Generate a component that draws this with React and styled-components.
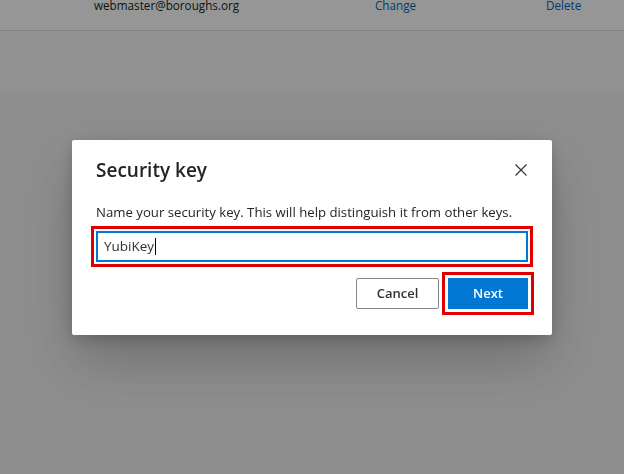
import React from 'react';
import styled, { createGlobalStyle } from 'styled-components';

const GlobalStyle = createGlobalStyle`
  html, body {
    margin: 0;
    padding: 0;
    height: 100%;
    overflow: hidden;
    background: #f2f2f2;
    font-family: "Open Sans", "Noto Sans", Arial, sans-serif;
  }
`;

const App = () => {
  return (
    <>
      <GlobalStyle />
      <Page>
        <EmailRow>
          <Cell>webmaster@boroughs.org</Cell>
          <LinkCell>Change</LinkCell>
          <LinkCell>Delete</LinkCell>
        </EmailRow>
        <Section />
      </Page>

      <Overlay>
        <Dialog role="dialog" aria-labelledby="dlg-title">
          <DialogHeader>
            <Title id="dlg-title">Security key</Title>
            <CloseButton aria-label="Close">
              <svg width="12" height="12" viewBox="0 0 12 12">
                <path d="M0.5 0.5 L11.5 11.5 M11.5 0.5 L0.5 11.5" stroke="#323130" strokeWidth="1.1" fill="none" />
              </svg>
            </CloseButton>
          </DialogHeader>
          <Description>
            Name your security key. This will help distinguish it from other keys.
          </Description>
          <Field highlighted>
            YubiKey<Caret />
          </Field>
          <Actions>
            <Button>Cancel</Button>
            <Button primary highlighted>Next</Button>
          </Actions>
        </Dialog>
      </Overlay>
    </>
  );
};

const Page = styled.div`
  min-height: 100vh;
  background: #f2f2f2;
`;

const EmailRow = styled.div`
  display: grid;
  grid-template-columns: 281px 171px auto;
  height: 30px;
  padding-left: 94px;
  background: #ffffff;
  border-bottom: 1px solid #d9d9d9;
  box-shadow: 0 1px 2px rgba(0, 0, 0, 0.08);
  font-size: 11.7px;
  line-height: 18px;
  overflow: hidden;
`;

const Cell = styled.span`
  margin-top: -4px;
  color: #201f1e;
`;

const LinkCell = styled(Cell)`
  color: #0067b8;
`;

const Section = styled.div`
  height: 62px;
  background: #f8f8f8;
`;

const Overlay = styled.div`
  position: fixed;
  inset: 0;
  display: flex;
  align-items: center;
  justify-content: center;
  background: rgba(0, 0, 0, 0.41);
`;

const Dialog = styled.div`
  width: 480px;
  box-sizing: border-box;
  padding: 16px 24px 26px;
  background: #ffffff;
  border-radius: 2px;
  box-shadow: 0 25.6px 57.6px rgba(0, 0, 0, 0.22), 0 4.8px 14.4px rgba(0, 0, 0, 0.18);
  display: flex;
  flex-direction: column;
`;

const DialogHeader = styled.div`
  display: flex;
  align-items: center;
  justify-content: space-between;
  height: 28px;
`;

const Title = styled.h2`
  margin: 0;
  font-size: 19px;
  line-height: 28px;
  font-weight: 600;
  color: #242424;
`;

const CloseButton = styled.button`
  display: flex;
  align-items: center;
  justify-content: center;
  width: 12px;
  height: 12px;
  padding: 0;
  margin-right: 1px;
  border: none;
  background: transparent;
  cursor: pointer;
`;

const Description = styled.p`
  margin: 18px 0 9px;
  font-size: 13.2px;
  line-height: 20px;
  white-space: nowrap;
  color: #242424;
`;

const Field = styled.div`
  display: flex;
  align-items: center;
  height: 31px;
  box-sizing: border-box;
  padding: 0 6px;
  border: 2px solid #0078d4;
  font-size: 13.5px;
  color: #323130;
  outline: ${({ highlighted }) => (highlighted ? '3px solid #e00000' : 'none')};
  outline-offset: 2px;
`;

const Caret = styled.span`
  display: inline-block;
  width: 1px;
  height: 17px;
  margin-left: 1px;
  background: #000000;
`;

const Actions = styled.div`
  display: flex;
  justify-content: flex-end;
  gap: 9px;
  margin-top: 16px;
`;

const Button = styled.button`
  height: 31px;
  min-width: ${({ primary }) => (primary ? '80px' : '83px')};
  padding: 0 16px;
  box-sizing: border-box;
  border-radius: ${({ highlighted }) => (highlighted ? '0' : '2px')};
  border: 1px solid ${({ primary }) => (primary ? '#0078d4' : '#8a8886')};
  background: ${({ primary }) => (primary ? '#0078d4' : '#ffffff')};
  color: ${({ primary }) => (primary ? '#ffffff' : '#323130')};
  font-family: inherit;
  font-size: 13px;
  font-weight: 600;
  cursor: pointer;
  outline: ${({ highlighted }) => (highlighted ? '3px solid #e00000' : 'none')};
  outline-offset: 3px;
`;

export default App;
